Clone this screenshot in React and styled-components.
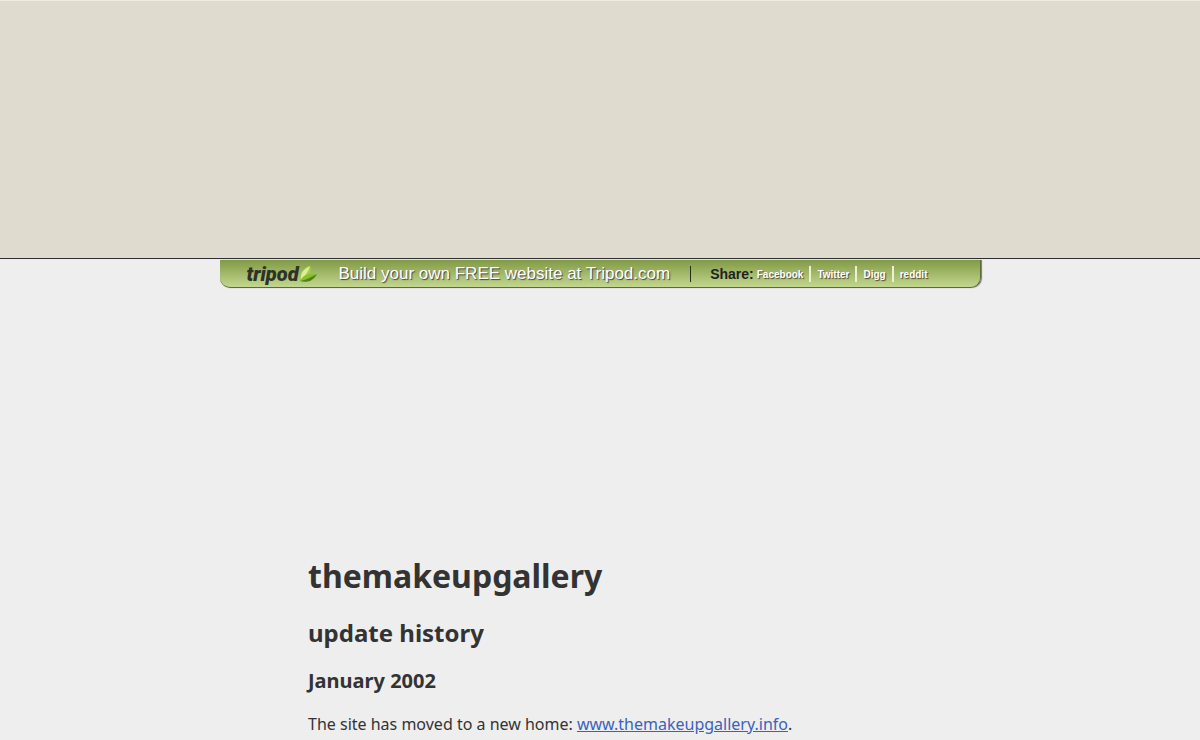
import React from "react";
import styled, { createGlobalStyle } from "styled-components";

const GlobalStyle = createGlobalStyle`
  * { box-sizing: border-box; }
  body {
    margin: 0;
    background: #eeeeee;
    color: #333333;
    font-family: "Noto Sans", sans-serif;
  }
`;

const Banner = styled.div`
  height: 259px;
  background: #dfdbcf;
  border-top: 1px solid #efece2;
  border-bottom: 1px solid #2e2e33;
`;

const TripodBar = styled.header`
  display: flex;
  align-items: center;
  width: 100%;
  max-width: 761px;
  height: 28px;
  margin: 1px auto 0;
  padding-left: 27px;
  border-radius: 0 0 10px 10px;
  border-right: 1px solid #5c693f;
  border-bottom: 1px solid #5c693f;
  background: linear-gradient(#809a45, #c3d78f);
  box-shadow: 1px 0 1px #77777a;
  font-family: "Liberation Sans", Arial, sans-serif;
  white-space: nowrap;
`;

const Logo = styled.a`
  display: flex;
  align-items: center;
  width: 71px;
  color: #2d3327;
  font: italic 900 20px/26px Roboto, "Liberation Sans", sans-serif;
  text-decoration: none;
`;

const Leaf = styled.svg`
  flex: none;
  width: 18px;
  height: 18px;
`;

const Slogan = styled.a`
  margin-left: 21px;
  color: #ffffff;
  font-size: 17px;
  line-height: 26px;
  text-decoration: none;
  text-shadow: 1px 1px 1px #444444;
`;

const Share = styled.div`
  display: flex;
  align-items: center;
  height: 16px;
  margin-left: 20px;
  padding-left: 19px;
  border-left: 1px solid #24301a;
`;

const ShareLabel = styled.span`
  margin-right: 3px;
  color: #222222;
  font-size: 14px;
  font-weight: 700;
`;

const ShareLink = styled.a`
  height: 16px;
  padding: 0 6px;
  color: #ffffff;
  font-size: 10px;
  font-weight: 700;
  line-height: 18px;
  text-decoration: none;
  text-shadow: 1px 1px 1px #554433;
  border-left: 2px solid #eff0d3;

  &:first-of-type {
    padding-left: 0;
    border-left: 0;
  }
`;

const Content = styled.main`
  max-width: 584px;
  margin: 264px auto 0;
`;

const Title = styled.h1`
  margin: 0;
  font-size: 32px;
  line-height: 48px;
`;

const Subtitle = styled.h2`
  margin: 16px 0 0;
  font-size: 24px;
  line-height: 34px;
`;

const Month = styled.h3`
  margin: 16px 0 0;
  font-size: 20px;
  line-height: 30px;
`;

const Text = styled.p`
  margin: 16px 0 0;
  font-size: 16px;
  line-height: 24px;

  a { color: #3a62bd; }
`;

const shareTargets = ["Facebook", "Twitter", "Digg", "reddit"];

export default function App() {
  return (
    <>
      <GlobalStyle />
      <Banner />
      <TripodBar>
        <Logo href="#tripod">
          tripod
          <Leaf viewBox="0 0 18 18" aria-hidden="true">
            <path d="M2 15C0 8 4 3 11 1C13 6 10 11 2 15Z" fill="#a4d13f" />
            <path d="M2 15C1 8 5 4 11 1C9 7 6 11 2 15Z" fill="#d9f096" />
            <path d="M1 16C4 10 9 8 18 9C14 16 9 18 1 16Z" fill="#8bc12f" />
            <path d="M1 16C7 15 12 12 18 9C14 16 9 18 1 16Z" fill="#4e8517" />
          </Leaf>
        </Logo>
        <Slogan href="#build">Build your own FREE website at Tripod.com</Slogan>
        <Share>
          <ShareLabel>Share:</ShareLabel>
          {shareTargets.map((name) => (
            <ShareLink key={name} href={`#${name.toLowerCase()}`}>{name}</ShareLink>
          ))}
        </Share>
      </TripodBar>
      <Content>
        <Title>themakeupgallery</Title>
        <Subtitle>update history</Subtitle>
        <Month>January 2002</Month>
        <Text>
          The site has moved to a new home: <a href="#new-home">www.themakeupgallery.info</a>.
        </Text>
      </Content>
    </>
  );
}
